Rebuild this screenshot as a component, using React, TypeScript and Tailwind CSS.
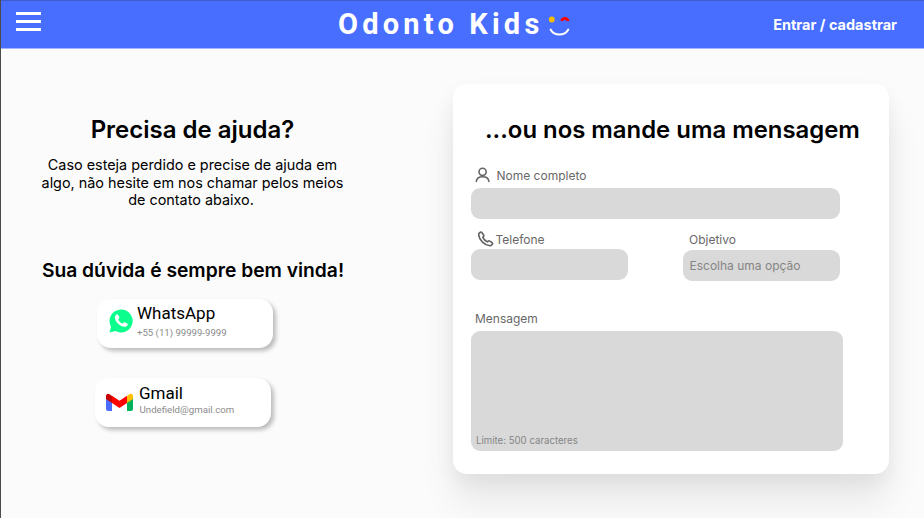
import { ReactNode } from "react";

function Smile() {
  return (
    <svg className="h-[26px] w-[24px]" viewBox="0 0 24 26" fill="none">
      <circle cx="4.8" cy="5.500" r="2.900" fill="#fbbc04" />
      <path d="M14.500 6.900c1.200-3.500 5.600-3.500 6.800 0" stroke="#ff0000" strokeWidth="2.800" />
      <path d="M3.700 15.700c3.800 6.400 13.700 6.400 17.500 0" stroke="#fff" strokeWidth="2.100" strokeLinecap="round" />
    </svg>
  );
}

function Header() {
  return (
    <header className="flex h-[49px] items-start border-t border-b border-t-[#405cc8] border-b-[#a3b5fd] bg-[#486eff] pr-[27px] pl-[15px] text-white">
      <button className="mt-[11px] flex w-[25px] flex-col gap-[5px]" aria-label="Menu">
        <span className="h-[3px] w-full bg-white" />
        <span className="h-[3px] w-full bg-white" />
        <span className="h-[3px] w-full bg-white" />
      </button>
      <div className="ml-[297px] flex">
        <h1 className="mt-[5px] font-[Roboto,sans-serif] text-[29px] leading-[36px] font-bold tracking-[4.200px] whitespace-nowrap">Odonto Kids</h1>
        <div className="mt-[13px] ml-[3px]"><Smile /></div>
      </div>
      <a className="mt-[14px] ml-auto text-[14.500px] leading-[19px] font-bold whitespace-nowrap">Entrar / cadastrar</a>
    </header>
  );
}

function WhatsAppIcon() {
  return (
    <svg className="h-[24px] w-[24px] shrink-0" viewBox="0 0 24 24">
      <path d="M12 .5A11.500 11.500 0 0 0 2 17.700L.5 23.500l6-1.500A11.500 11.500 0 1 0 12 .5Z" fill="#0cff8c" />
      <path d="M7.300 5.700c.5-.5 1.300-.5 1.700.1l1.300 2.300c.3.500.1 1-.3 1.400l-.8.9c.8 1.900 2.400 3.400 4.500 4.200l1-1.100c.4-.4.900-.5 1.400-.2l2.200 1.200c.5.300.6.900.3 1.500-.6 1.300-1.900 2-3.300 1.800-4.700-.7-9.100-4.900-9.400-9.400-.1-1.100.5-2 1.400-2.700Z" fill="#fff" />
    </svg>
  );
}

function GmailIcon() {
  return (
    <svg className="h-[18px] w-[27px] shrink-0" viewBox="0 0 27 18">
      <path d="M0 5l6 4.500V18H2a2 2 0 0 1-2-2Z" fill="#4a6dff" />
      <path d="M27 5l-6 4.500V18h4a2 2 0 0 0 2-2Z" fill="#00b25b" />
      <path d="M21 3l2-1.500C25-.2 27 .9 27 3v3l-6 4Z" fill="#ffbf00" />
      <path d="M6 3L4 1.500C2-.2 0 .9 0 3v3l6 4Z" fill="#c90000" />
      <path d="M6 2.700l7.500 5.100L21 2.700v7.200L13.500 15 6 9.900Z" fill="#ff0000" />
    </svg>
  );
}

function Contact({ icon, name, detail, className }: { icon: ReactNode; name: string; detail: ReactNode; className: string }) {
  return (
    <div className={`flex h-[49px] w-[176px] rounded-[14px] bg-white font-[Roboto,sans-serif] shadow-[3px_3px_4px_rgba(0,0,0,0.25)] ${className}`}>
      {icon}
      <div className="whitespace-nowrap">
        <p className="text-[17px] leading-[20px] text-black">{name}</p>
        {detail}
      </div>
    </div>
  );
}

function Help() {
  return (
    <section className="w-[384px] pt-[66px] text-center text-black">
      <h2 className="-ml-px text-[24px] leading-[30px] font-semibold">Precisa de ajuda?</h2>
      <p className="mt-[11px] -ml-px text-[14.400px] leading-[17.500px]">
        Caso esteja perdido e precise de ajuda em
        <br />
        algo, não hesite em nos chamar pelos meios
        <br />
        <span className="-ml-[3px]">de contato abaixo.</span>
      </p>
      <h3 className="mt-[49px] text-[19.250px] leading-[24px] font-semibold">Sua dúvida é sempre bem vinda!</h3>
      <div className="text-left">
        <Contact
          className="mt-[17px] ml-[96px] gap-[4px] pt-[4px] pl-[12px]"
          icon={<div className="mt-[6.500px]"><WhatsAppIcon /></div>}
          name="WhatsApp"
          detail={<p className="mt-[4px] text-[9.600px] leading-[12px] text-[#8b8b8b]">+55 (11) 99999-9999</p>}
        />
        <Contact
          className="mt-[30px] ml-[93.500px] gap-[6px] pt-[5px] pl-[11.500px]"
          icon={<div className="mt-[10px]"><GmailIcon /></div>}
          name="Gmail"
          detail={<p className="mt-px ml-[0.500px] text-[9.700px] leading-[12px] text-[#8b8b8b]">Undefield@gmail.com</p>}
        />
      </div>
    </section>
  );
}

function PersonIcon() {
  return (
    <svg className="h-[16px] w-[16px]" viewBox="0 0 16 16" fill="none" stroke="#666666" strokeWidth="1.600" strokeLinecap="round">
      <circle cx="7.600" cy="4.800" r="3.600" />
      <path d="M1.300 14.500c.7-6.300 11.900-6.300 12.600 0" />
    </svg>
  );
}

function PhoneIcon() {
  return (
    <svg className="h-[16px] w-[16px]" viewBox="0 0 16 16" fill="none" stroke="#626262" strokeWidth="1.600" strokeLinejoin="round">
      <path d="M2.300 1.300c-1 .5-1.700 1.400-1.600 2.600C1.200 9.200 6.500 14.300 11.800 14.700c1.200.1 2.100-.6 2.600-1.600.3-.6.100-1.200-.4-1.600l-2.300-1.400c-.5-.3-1.100-.3-1.500.1l-.8.700c-1.900-.9-3.700-2.700-4.600-4.600l.7-.8c.4-.4.4-1 .1-1.500L4 1.700c-.4-.5-1.100-.7-1.700-.4Z" />
    </svg>
  );
}

function MessageForm() {
  return (
    <section className="mt-[35px] ml-[68px] h-[390px] w-[436px] rounded-[14px] bg-white pl-[17.500px] text-[12px] leading-[15px] text-[#686868] shadow-[0_30px_36px_rgba(0,0,0,0.07),0_8px_20px_rgba(0,0,0,0.06)]">
      <h2 className="mt-[31px] ml-[14.500px] text-[23.900px] leading-[30px] font-semibold whitespace-nowrap text-black">...ou nos mande uma mensagem</h2>
      <div className="mt-[22px] ml-[4.500px] flex h-[16px] items-center gap-[5.500px]"><PersonIcon /><span>Nome completo</span></div>
      <div className="mt-[5px] h-[30.500px] w-[369px] rounded-[9px] bg-[#d9d9d9]" />
      <div className="flex w-[369px] justify-between">
        <div>
          <div className="mt-[12.500px] ml-[7.500px] flex h-[16px] items-center gap-[1.500px]"><PhoneIcon /><span>Telefone</span></div>
          <div className="mt-[2px] h-[31px] w-[157px] rounded-[9px] bg-[#d9d9d9]" />
        </div>
        <div>
          <div className="mt-[12.500px] ml-[6.500px] flex h-[16px] items-center">Objetivo</div>
          <div className="mt-[3px] flex h-[30.500px] w-[157px] items-center rounded-[9px] bg-[#d9d9d9] pl-[7px] text-[#858585]">Escolha uma opção</div>
        </div>
      </div>
      <div className="mt-[30.500px] ml-[4.500px] h-[16px]">Mensagem</div>
      <div className="mt-[3.500px] flex h-[120px] w-[372.400px] items-end rounded-[9px] bg-[#d9d9d9] pb-[4px] pl-[5.500px] text-[9.650px] leading-[12px] text-[#858585]">Limite: 500 caracteres</div>
    </section>
  );
}

export default function App() {
  return (
    <div className="h-[518px] w-[924px] overflow-hidden border-l border-[#4c4c4c] bg-[#fbfbfb] font-[Inter,sans-serif]">
      <Header />
      <main className="flex">
        <Help />
        <MessageForm />
      </main>
    </div>
  );
}
